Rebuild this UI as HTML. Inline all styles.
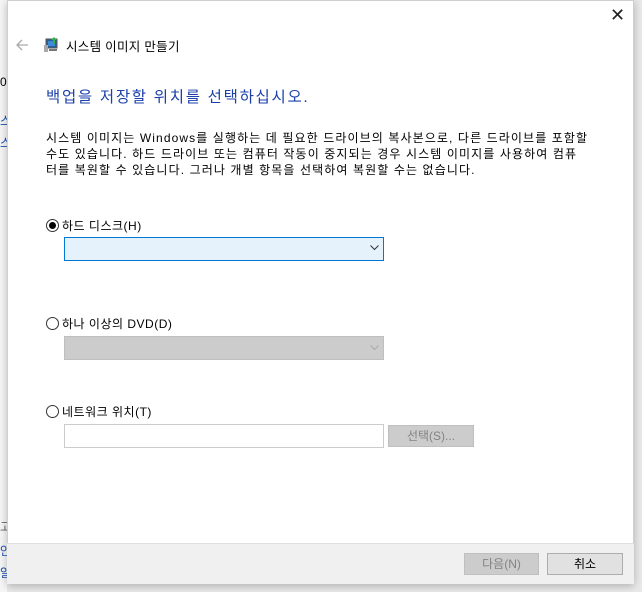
<!DOCTYPE html>
<html><head><meta charset="utf-8"><style>
*{margin:0;padding:0;box-sizing:border-box}
body{width:642px;height:592px;background:#e9e9e9;position:relative;overflow:hidden;font-family:"Liberation Sans","Noto Sans CJK KR",sans-serif;font-size:12px;color:#000}
.a{position:absolute;white-space:nowrap}
.win{position:absolute;left:7px;top:0;width:627px;height:584px;background:#fff;border:1px solid #cfcfcf;box-shadow:0 2px 8px rgba(0,0,0,.25)}
.foot{position:absolute;left:7px;top:543px;width:627px;height:41px;background:#f0f0f0;border-top:1px solid #dfdfdf}
.radio{position:absolute;width:13px;height:13px;border:1px solid #333;border-radius:50%;background:#fff}
.dot{position:absolute;left:2px;top:2px;width:7px;height:7px;border-radius:50%;background:#000}
.box{position:absolute}
.btn{position:absolute;height:22px;border:1px solid #adadad;background:#e1e1e1;text-align:center;line-height:20px}
.l{letter-spacing:0.5px}
</style></head><body>
<div class="a" style="left:0;top:0;width:7px;height:592px;background:#f6f6f6"></div>
<div class="a" style="left:0;top:112px;color:#1a4fb0;font-size:12px">스</div>
<div class="a" style="left:0;top:134px;color:#1a4fb0;font-size:12px">스</div>
<div class="a" style="left:0;top:75px;font-size:12px">0</div>
<div class="a" style="left:0;top:518px;color:#666">고</div>
<div class="a" style="left:0;top:542px;color:#1a4fb0">안</div>
<div class="a" style="left:0;top:564px;color:#1a4fb0">알</div>
<div class="win"></div>
<div class="foot"></div>
<div class="a" style="left:610px;top:5px;font-size:18px;color:#222;font-weight:300">✕</div>
<svg class="a" style="left:15px;top:38px" width="14" height="14" viewBox="0 0 14 14"><path d="M13 7H2M7 2L2 7l5 5" stroke="#aaa" stroke-width="1.3" fill="none"/></svg>
<svg class="a" style="left:43px;top:36px" width="18" height="16" viewBox="0 0 18 16"><rect x="3" y="3" width="11" height="9" fill="#2b5f9a" stroke="#555"/><rect x="5" y="5" width="7" height="5" fill="#3c8ad8"/><rect x="1" y="9" width="4" height="7" fill="#aaa"/><path d="M11 1l3 3h-2v4h-2V4H8z" fill="#2bb04a"/><rect x="6" y="13" width="8" height="2" fill="#777"/></svg>
<div class="a" style="left:66px;top:36px;font-size:12.5px;color:#000;letter-spacing:0.3px">시스템 이미지 만들기</div>
<div class="a" style="left:46px;top:85px;font-size:15.5px;color:#1b3fab;letter-spacing:1.7px">백업을 저장할 위치를 선택하십시오.</div>
<div class="a" style="left:46px;top:130px;line-height:16px;font-size:12px;letter-spacing:1.1px">시스템 이미지는 Windows를 실행하는 데 필요한 드라이브의 복사본으로, 다른 드라이브를 포함할<br>수도 있습니다. 하드 드라이브 또는 컴퓨터 작동이 중지되는 경우 시스템 이미지를 사용하여 컴퓨<br>터를 복원할 수 있습니다. 그러나 개별 항목을 선택하여 복원할 수는 없습니다.</div>
<div class="radio" style="left:46px;top:219px"><div class="dot"></div></div>
<div class="a l" style="left:62px;top:217px">하드 디스크(H)</div>
<div class="box" style="left:64px;top:237px;width:320px;height:24px;background:#e5f1fb;border:1px solid #0078d7"></div>
<svg class="a" style="left:370px;top:245px" width="9" height="6"><path d="M0.5 0.5l4 4 4-4" stroke="#333" fill="none"/></svg>
<div class="radio" style="left:46px;top:317px"></div>
<div class="a l" style="left:62px;top:315px">하나 이상의 DVD(D)</div>
<div class="box" style="left:64px;top:336px;width:320px;height:24px;background:#cccccc;border:1px solid #bfbfbf"></div>
<svg class="a" style="left:370px;top:345px" width="9" height="6"><path d="M0.5 0.5l4 4 4-4" stroke="#aaa" fill="none"/></svg>
<div class="radio" style="left:46px;top:405px"></div>
<div class="a l" style="left:62px;top:403px">네트워크 위치(T)</div>
<div class="box" style="left:64px;top:424px;width:320px;height:24px;background:#fff;border:1px solid #ccc"></div>
<div class="btn" style="left:388px;top:425px;width:86px;background:#ccc;border-color:#bfbfbf;color:#838383">선택(S)...</div>
<div class="btn" style="left:464px;top:553px;width:75px;background:#ccc;border-color:#bfbfbf;color:#838383">다음(N)</div>
<div class="btn" style="left:547px;top:553px;width:76px">취소</div>
</body></html>
